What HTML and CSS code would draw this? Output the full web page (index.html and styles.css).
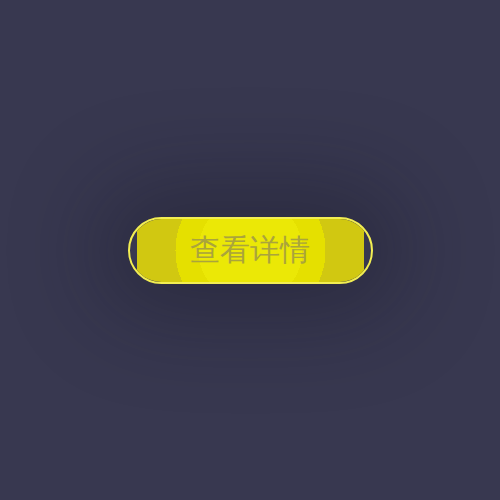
FILE: index.html
```html
<!DOCTYPE html>
<html lang="zh">
  <head>
    <meta charset="UTF-8" />
    <title>查看详情</title>
    <link rel="stylesheet" href="styles.css">
  </head>
  <body>
    <div class="stage">
      <button class="detail-btn" type="button">
        <span class="detail-fill">查看详情</span>
      </button>
    </div>
  </body>
</html>
```

FILE: styles.css
```css
html,
body {
  margin: 0;
  height: 100%;
}
body {
  background-color: #383850;
  font-family: "Noto Sans CJK SC", "Noto Sans", sans-serif;
}
.stage {
  height: 100%;
  display: flex;
  align-items: center;
  justify-content: center;
}
.detail-btn {
  width: 245px;
  height: 67px;
  padding: 0 7px;
  border: 2px solid #f2ee52;
  border-radius: 34px;
  background: transparent;
  overflow: hidden;
  display: flex;
  box-shadow: 0 0 90px 30px rgba(20, 20, 34, 0.35);
  cursor: pointer;
}
.detail-fill {
  flex: 1;
  display: flex;
  align-items: center;
  justify-content: center;
  background: radial-gradient(circle at center, #ebe806 0 52px, #e5e000 52px 75px, #d1c811 75px);
  color: #aaa43c;
  font-size: 30px;
  letter-spacing: 0;
}
```
